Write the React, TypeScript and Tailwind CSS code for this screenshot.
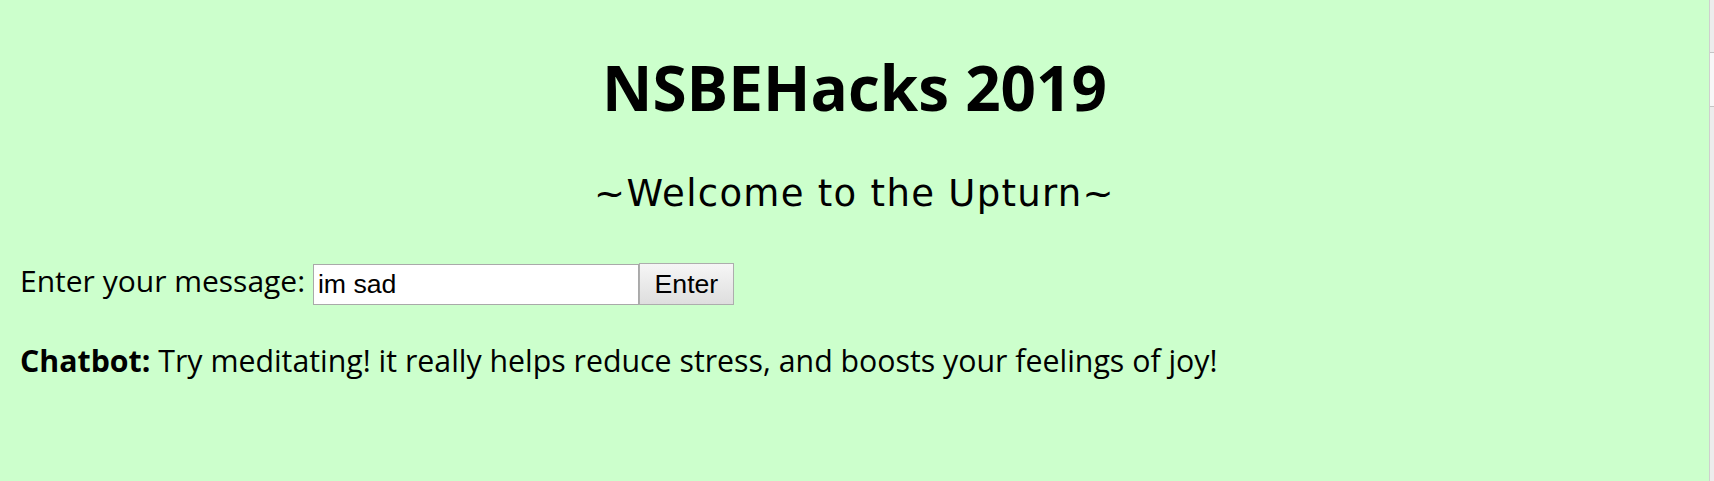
import React from "react";

export default function App() {
  return (
    <div className="flex h-[481px] w-full bg-[#ccffcc] text-black" style={{ fontFamily: '"Open Sans", "Noto Sans", sans-serif' }}>
      <main className="flex-1 px-[20px] pt-[47px]">
        {/* Title */}
        <h1 className="text-center text-[62px] font-bold leading-[80px]">NSBEHacks 2019</h1>
        <h3
          className="mt-[43px] text-center text-[37px] font-normal leading-[48px] tracking-[1.3px]"
          style={{ fontFamily: '"DejaVu Sans", Verdana, sans-serif' }}
        >
          ~Welcome to the Upturn~
        </h3>

        {/* Message form */}
        <div className="mt-[45px] flex items-start">
          <label className="text-[30px] leading-[36px]">Enter your message:&nbsp;</label>
          <input
            defaultValue="im sad"
            className="mt-[1px] h-[41px] w-[326px] border border-[#a9a9a9] bg-white px-[4px] text-[26.67px] outline-none"
            style={{ fontFamily: '"Liberation Sans", Arial, sans-serif' }}
          />
          <button
            className="h-[42px] w-[95px] border border-[#adadad] bg-gradient-to-b from-[#f6f6f6] to-[#dedede] text-[26.67px]"
            style={{ fontFamily: '"Liberation Sans", Arial, sans-serif' }}
          >
            Enter
          </button>
        </div>

        <p className="mt-[34px] text-[30.3px] leading-[44px]">
          <b>Chatbot:</b> Try meditating! it really helps reduce stress, and boosts your feelings of joy!
        </p>
      </main>

      {/* scrollbar edge */}
      <div className="flex w-[5px] flex-col border-l border-[#cfcfcf] bg-[#ececec]">
        <div className="h-[52px]" />
        <div className="h-[55px] border-y border-[#c4c4c4] bg-[#f7f7f7]" />
      </div>
    </div>
  );
}
